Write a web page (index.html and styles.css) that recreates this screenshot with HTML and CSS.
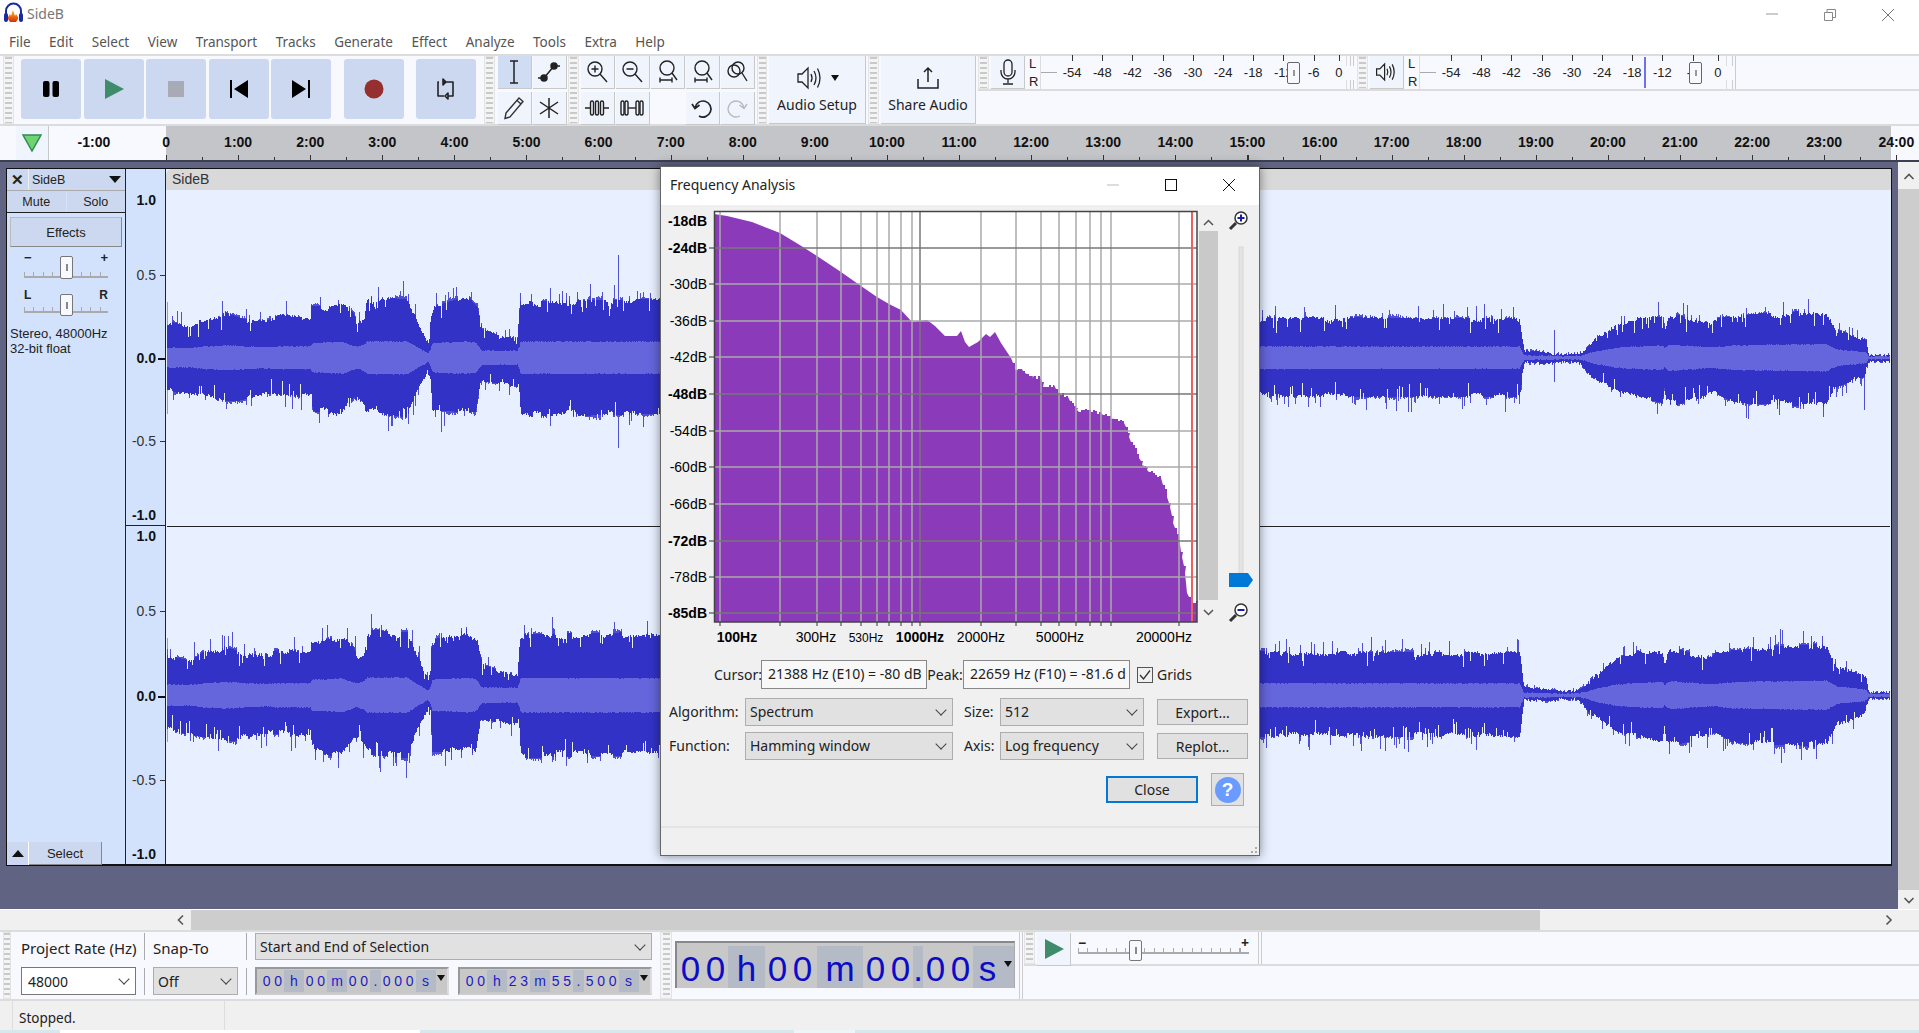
FILE: index.html
```html
<!DOCTYPE html>
<html lang="en">
<head>
  <meta charset="UTF-8" />
  <title>SideB</title>
  <link rel="stylesheet" href="styles.css">
</head>
<body>

  <!-- Title and menu -->
  <header class="titlebar">
    <svg class="logo" width="24" height="24" viewBox="0 0 24 24">
      <defs><linearGradient id="logo-wave" x1="0" y1="0" x2="0" y2="1"><stop offset="0" stop-color="#f7c01a"/><stop offset="1" stop-color="#e02a10"/></linearGradient></defs>
      <path d="M5 15V10a7.5 7.5 0 0 1 15 0v5" fill="none" stroke="#1a2a9c" stroke-width="2"/>
      <rect x="3" y="12" width="4" height="9" rx="2" fill="#1a2a9c"/>
      <rect x="18" y="12" width="4" height="9" rx="2" fill="#1a2a9c"/>
      <path d="M7 16l2-3 1 2 2-6 2 6 1-2 2 3v2l-2 3h-6l-2-3z" fill="url(#logo-wave)"/>
    </svg>
    <span class="app-title">SideB</span>
    <div class="win-controls">
      <svg width="14" height="14" viewBox="0 0 14 14"><path d="M1 6h12" stroke="#999" fill="none"/></svg>
      <svg width="14" height="14" viewBox="0 0 14 14"><path d="M1.5 4.5h8v8h-8zM4 4.500V1.500h8.500v8H9.500" stroke="#888" fill="none"/></svg>
      <svg width="14" height="14" viewBox="0 0 14 14"><path d="M1 1l12 12M13 1L1 13" stroke="#777" fill="none"/></svg>
    </div>
  </header>
  <nav class="menubar">
    <span>File</span><span>Edit</span><span>Select</span><span>View</span><span>Transport</span><span>Tracks</span><span>Generate</span><span>Effect</span><span>Analyze</span><span>Tools</span><span>Extra</span><span>Help</span>
  </nav>

  <!-- Toolbars -->
  <section class="toolrow">
    <div class="dock dock-transport">
      <div class="grip"></div>
      <div class="transport">
        <button class="tbtn"><svg width="24" height="24" viewBox="0 0 24 24"><rect x="4" y="4" width="6.500" height="16" rx="2"/><rect x="13.500" y="4" width="6.500" height="16" rx="2"/></svg></button>
        <button class="tbtn"><svg width="24" height="24" viewBox="0 0 24 24"><path d="M3 2l19 10L3 22z" fill="#3f8c6c"/></svg></button>
        <button class="tbtn"><svg width="24" height="24" viewBox="0 0 24 24"><rect x="4" y="4" width="16" height="16" fill="#a8aab6"/></svg></button>
        <button class="tbtn"><svg width="24" height="24" viewBox="0 0 24 24"><path d="M3 3h2v18H3zM21 3v18L7 12z"/></svg></button>
        <button class="tbtn"><svg width="24" height="24" viewBox="0 0 24 24"><path d="M19 3h2v18h-2zM3 3v18l14-9z"/></svg></button>
        <button class="tbtn tbtn-record"><svg width="24" height="24" viewBox="0 0 24 24"><circle cx="12" cy="12" r="9.500" fill="#963030"/></svg></button>
        <button class="tbtn tbtn-loop"><svg width="24" height="24" viewBox="0 0 24 24" fill="none" stroke="#222" stroke-width="1.600"><path d="M9 5h10v14H14M10 19H4V5h1M9 2v6l3-3zM14 16v6l-3-3z" stroke-linejoin="round"/></svg></button>
      </div>
    </div>

    <div class="dock dock-tools">
      <div class="grip"></div>
      <div class="tool-grid">
        <button class="ibtn ibtn-on"><svg width="22" height="26" viewBox="0 0 22 26" fill="none" stroke="#222" stroke-width="1.500"><path d="M7 2h8M7 24h8M11 2v22"/></svg></button>
        <button class="ibtn"><svg width="26" height="26" viewBox="0 0 26 26" fill="none" stroke="#222" stroke-width="1.500"><path d="M2 19h6l10-12h6"/><circle cx="8" cy="19" r="3" fill="#222"/><circle cx="18" cy="7" r="3" fill="#222"/></svg></button>
        <button class="ibtn"><svg width="26" height="26" viewBox="0 0 26 26" fill="none" stroke="#333" stroke-width="1.400"><path d="M5 18L18 3l4 3.500L9 22l-5 1.500zM16 5.500l4 3.500"/></svg></button>
        <button class="ibtn"><svg width="24" height="24" viewBox="0 0 24 24" fill="none" stroke="#222" stroke-width="1.500"><path d="M12 2v20M3 6l18 12M21 6L3 18"/></svg></button>
      </div>
    </div>

    <div class="dock dock-zoom">
      <div class="grip"></div>
      <div class="zoom-grid">
        <button class="ibtn"><svg class="ico-zoom" width="24" height="26" viewBox="0 0 24 26"><circle cx="10" cy="10" r="7"/><path d="M15 15l7 8M6.500 10h7M10 6.500v7"/></svg></button>
        <button class="ibtn"><svg class="ico-zoom" width="24" height="26" viewBox="0 0 24 26"><circle cx="10" cy="10" r="7"/><path d="M15 15l7 8M6.500 10h7"/></svg></button>
        <button class="ibtn"><svg class="ico-zoom" width="24" height="26" viewBox="0 0 24 26"><circle cx="12" cy="9" r="7"/><path d="M17 14l5 7M5 21h12M5 18.500v5M17 18.500v5"/></svg></button>
        <button class="ibtn"><svg class="ico-zoom" width="24" height="26" viewBox="0 0 24 26"><circle cx="12" cy="9" r="7"/><path d="M17 14l5 7M5 21h12M5 18.500v5M17 18.500v5"/></svg></button>
        <button class="ibtn"><svg class="ico-zoom" width="24" height="26" viewBox="0 0 24 26"><circle cx="9" cy="12" r="6"/><circle cx="13" cy="9" r="6"/><path d="M17 14l5 8"/></svg></button>
        <button class="ibtn"><svg class="ico-zoom" width="26" height="24" viewBox="0 0 26 24"><path d="M1 12h5M20 12h5"/><rect x="6.500" y="5" width="3" height="14" rx="1.500"/><rect x="11.500" y="5" width="3" height="14" rx="1.500"/><rect x="16.500" y="5" width="3" height="14" rx="1.500"/></svg></button>
        <button class="ibtn"><svg class="ico-zoom" width="26" height="24" viewBox="0 0 26 24"><path d="M9 12h8"/><rect x="2" y="5" width="3" height="14" rx="1.500"/><rect x="6" y="5" width="3" height="14" rx="1.500"/><rect x="17" y="5" width="3" height="14" rx="1.500"/><rect x="21" y="5" width="3" height="14" rx="1.500"/></svg></button>
        <span></span>
        <button class="ibtn"><svg class="ico-zoom" width="26" height="26" viewBox="0 0 26 26"><path d="M6 13a8 8 0 1 1 4 8M3 9l3 4.500L10.500 10" stroke-width="1.700"/></svg></button>
        <button class="ibtn"><svg class="ico-redo" width="26" height="26" viewBox="0 0 26 26"><path d="M20 13a8 8 0 1 0-4 8M23 9l-3 4.500L15.500 10"/></svg></button>
      </div>
    </div>

    <div class="dock dock-setup">
      <div class="grip"></div>
      <button class="big-btn">
        <span class="big-ico">
          <svg width="30" height="24" viewBox="0 0 30 24" fill="none" stroke="#222" stroke-width="1.300"><path d="M2 8h4l6-6v20l-6-6H2zM15 8q2 4 0 8M18 5q4 7 0 14M21.500 2.500q5 9.500 0 19"/></svg>
          <i class="caret"></i>
        </span>
        Audio Setup
      </button>
    </div>

    <div class="dock dock-share">
      <div class="grip"></div>
      <button class="big-btn">
        <span class="big-ico">
          <svg width="26" height="26" viewBox="0 0 26 26" fill="none" stroke="#222" stroke-width="1.500"><path d="M13 3v14M9 7l4-4 4 4M3 14v9h20v-9"/></svg>
        </span>
        Share Audio
      </button>
    </div>

    <div class="dock dock-meters">
      <div class="meter-row">
        <div class="grip"></div>
        <button class="ibtn meter-btn"><svg width="20" height="28" viewBox="0 0 20 28" fill="none" stroke="#222" stroke-width="1.300"><rect x="6" y="2" width="8" height="16" rx="4"/><path d="M3 12v2a7 7 0 0 0 14 0v-2M10 21v4M5 26h10"/></svg></button>
        <div class="lr"><span>L</span><span>R</span></div>
        <div class="meter meter-rec">
          <span>-54</span><span>-48</span><span>-42</span><span>-36</span><span>-30</span><span>-24</span><span>-18</span><span>-12</span><span>-6</span><span class="meter-zero">0</span>
          <i class="meter-thumb"></i>
        </div>
        <div class="dock-sep"></div>
        <div class="grip"></div>
        <button class="ibtn meter-btn"><svg width="24" height="24" viewBox="0 0 30 24" fill="none" stroke="#222" stroke-width="1.500"><path d="M2 8h4l6-6v20l-6-6H2zM15 8q2 4 0 8M18 5q4 7 0 14M21.500 2.500q5 9.500 0 19"/></svg></button>
        <div class="lr"><span>L</span><span>R</span></div>
        <div class="meter meter-play">
          <span>-54</span><span>-48</span><span>-42</span><span>-36</span><span>-30</span><span>-24</span><span>-18</span><span>-12</span><span>-6</span><span class="meter-zero">0</span>
          <i class="meter-thumb"></i>
          <i class="meter-level"></i>
        </div>
        <div class="dock-sep"></div>
      </div>
    </div>
  </section>

  <!-- Timeline -->
  <section class="ruler">
    <button class="pin"><svg width="22" height="20" viewBox="0 0 22 20"><path d="M2 2h18L11 18z" fill="#6fd46f" stroke="#2f8a5a" stroke-width="1.500"/></svg></button>
    <div class="ruler-labels">
      <span>-1:00</span><span>0</span><span>1:00</span><span>2:00</span><span>3:00</span><span>4:00</span><span>5:00</span><span>6:00</span><span>7:00</span><span>8:00</span><span>9:00</span><span>10:00</span><span>11:00</span><span>12:00</span><span>13:00</span><span>14:00</span><span>15:00</span><span>16:00</span><span>17:00</span><span>18:00</span><span>19:00</span><span>20:00</span><span>21:00</span><span>22:00</span><span>23:00</span><span>24:00</span>
    </div>
  </section>

  <!-- Track -->
  <main class="tracks">
    <div class="track">
      <div class="tcp">
        <div class="tcp-head">
          <button class="tcp-close">✕</button>
          <button class="tcp-name">SideB<i class="caret caret-big"></i></button>
        </div>
        <div class="tcp-btns"><button>Mute</button><button>Solo</button></div>
        <button class="tcp-effects">Effects</button>
        <div class="tcp-slider"><span>−</span><span>+</span><i></i></div>
        <div class="tcp-slider tcp-pan"><span>L</span><span>R</span><i></i></div>
        <p class="tcp-info">Stereo, 48000Hz<br>32-bit float</p>
        <div class="tcp-foot">
          <button class="tcp-collapse"><i class="caret-up"></i></button>
          <button class="tcp-select">Select</button>
        </div>
      </div>
      <div class="vruler">
        <div class="vr-ch vr-top"><span class="major">1.0</span><span>0.5</span><span class="major zero">0.0</span><span>-0.5</span><span class="major">-1.0</span></div>
        <div class="vr-ch vr-bottom"><span class="major">1.0</span><span>0.5</span><span class="major zero">0.0</span><span>-0.5</span><span class="major">-1.0</span></div>
      </div>
      <div class="wave">
        <div class="wave-head">SideB</div>
        <svg id="wave" width="1725" height="675" viewBox="166 190 1725 675"></svg>
      </div>
    </div>
    <div class="vscroll">
      <svg class="chev" width="12" height="14" viewBox="0 0 12 14"><path d="M1.500 9L6 4.500 10.500 9"/></svg>
      <div class="vscroll-thumb"></div>
      <svg class="chev" width="12" height="14" viewBox="0 0 12 14"><path d="M1.500 5L6 9.500 10.500 5"/></svg>
    </div>
  </main>

  <div class="hscroll">
    <div class="hscroll-left"></div>
    <svg class="chev" width="21" height="14" viewBox="0 0 21 14"><path d="M13 2.500L8.500 7l4.500 4.500"/></svg>
    <div class="hscroll-thumb"></div>
    <svg class="chev chev-end" width="21" height="14" viewBox="0 0 21 14"><path d="M8.500 2.500L13 7l-4.500 4.500"/></svg>
  </div>

  <!-- Selection toolbar -->
  <section class="selbar">
    <div class="grip grip-sel"></div>
    <div class="selection">
      <span class="sel-label">Project Rate (Hz)</span>
      <i class="sel-sep"></i>
      <span class="sel-label">Snap-To</span>
      <i class="sel-sep"></i>
      <div class="combo sel-mode">Start and End of Selection</div>
      <div class="combo combo-white">48000</div>
      <i class="sel-sep"></i>
      <div class="combo">Off</div>
      <i class="sel-sep"></i>
      <div class="timefield"><b>0</b><b>0</b><u>h</u><b>0</b><b>0</b><u>m</u><b>0</b><b>0</b><em>.</em><b>0</b><b>0</b><b>0</b><u>s</u><i class="caret caret-time"></i></div>
      <i></i>
      <div class="timefield"><b>0</b><b>0</b><u>h</u><b>2</b><b>3</b><u>m</u><b>5</b><b>5</b><em>.</em><b>5</b><b>0</b><b>0</b><u>s</u><i class="caret caret-time"></i></div>
    </div>
    <div class="grip grip-time"></div>
    <div class="bigtime">
      <div class="bt-cell"><b>0</b><b>0</b></div><div class="bt-unit bt-h">h</div>
      <div class="bt-cell bt-min"><b>0</b><b>0</b></div><div class="bt-unit bt-m">m</div>
      <div class="bt-cell"><b>0</b><b>0</b></div><div class="bt-dot">.</div>
      <div class="bt-cell"><b>0</b><b>0</b></div><div class="bt-unit bt-s">s</div>
      <div class="bt-arrow"><i class="caret caret-time"></i></div>
    </div>
    <div class="dock-sep dock-sep-sel"></div>
    <div class="speed">
      <div class="grip"></div>
      <button class="ibtn meter-btn"><svg width="24" height="24" viewBox="0 0 24 24"><path d="M3 2l19 10L3 22z" fill="#3f8c6c"/></svg></button>
      <div class="tcp-slider speed-slider"><span>−</span><span>+</span><i></i></div>
      <div class="dock-sep"></div>
    </div>
  </section>

  <footer class="statusbar"><span class="status-text">Stopped.</span></footer>
  <div class="taskstrip"></div>

  <!-- Frequency Analysis dialog -->
  <div class="dialog">
    <div class="dlg-title">
      <span>Frequency Analysis</span>
      <div class="dlg-controls">
        <svg width="14" height="14" viewBox="0 0 14 14"><path d="M1 7h12" stroke="#bbb" fill="none"/></svg>
        <svg width="14" height="14" viewBox="0 0 14 14"><rect x="1.500" y="1.500" width="11" height="11" stroke="#111" fill="none"/></svg>
        <svg width="14" height="14" viewBox="0 0 14 14"><path d="M1 1l12 12M13 1L1 13" stroke="#111" fill="none"/></svg>
      </div>
    </div>
    <svg id="plot" width="598" height="445" viewBox="661 205 598 445"></svg>
    <div class="readouts">
      <label class="ro-cursor">Cursor:</label>
      <div class="ro-field">21388 Hz (E10) = -80 dB</div>
      <label class="ro-peak">Peak:</label>
      <div class="ro-field ro-field2">22659 Hz (F10) = -81.6 d</div>
      <i class="check"><svg width="14" height="14" viewBox="0 0 14 14"><path d="M2 7l3.500 4L12 2.500" fill="none" stroke="#333" stroke-width="1.300"/></svg></i>
      <span>Grids</span>
    </div>
    <div class="params">
      <span>Algorithm:</span><div class="combo">Spectrum</div>
      <span class="param-right">Size:</span><div class="combo">512</div>
      <button class="dlg-btn">Export...</button>
      <span>Function:</span><div class="combo">Hamming window</div>
      <span class="param-right">Axis:</span><div class="combo">Log frequency</div>
      <button class="dlg-btn">Replot...</button>
    </div>
    <div class="dlg-actions">
      <button class="dlg-btn dlg-close">Close</button>
      <button class="dlg-help"><span>?</span></button>
    </div>
    <div class="dlg-foot"></div>
  </div>

  <script src="script.js"></script>
</body>
</html>
```

FILE: styles.css
```css
/* --- BASE --- */
* { margin: 0; padding: 0; box-sizing: border-box; }
html, body { width: 1919px; height: 1033px; overflow: hidden; }
body {
  position: relative;
  display: flex;
  flex-direction: column;
  background: #fff;
  font-family: "Noto Sans", sans-serif;
  font-size: 13px;
  color: #222;
}
button { font: inherit; color: inherit; border: 0; background: none; }
svg { display: block; }

/* --- TITLE + MENU --- */
.titlebar {
  height: 30px;
  flex: none;
  display: flex;
  align-items: center;
  padding-left: 1px;
}
.logo { margin-top: -4px; }
.app-title { margin: -3px 0 0 2px; font-size: 14px; color: #777; }
.win-controls {
  margin-left: auto;
  display: flex;
  gap: 44px;
  padding-right: 24px;
}
.menubar {
  height: 24px;
  flex: none;
  display: flex;
  align-items: center;
  gap: 18.500px;
  padding-left: 9px;
  font-size: 13.500px;
  color: #555;
}

/* --- TOOLBARS --- */
.toolrow {
  height: 72px;
  flex: none;
  display: flex;
  background: #f8f9ff;
  border-top: 2px solid #dcdcdc;
  border-bottom: 2px solid #dcdcdc;
}
.dock { display: flex; height: 100%; }
.grip {
  width: 11px;
  flex: none;
  background-color: #f3f4f6;
  background-image: repeating-linear-gradient(#c9c9c9 0 2px, transparent 2px 5px);
  background-size: 7px 100%;
  background-repeat: no-repeat;
  background-position: center;
  border: 1px solid #e4e4e4;
}
.dock-transport { width: 482px; padding-left: 3px; }
.transport { display: flex; gap: 2.5px; padding: 3px 0 4px 7px; }
.tbtn {
  width: 60px;
  height: 60px;
  background: #ccd8ef;
  border-radius: 3px;
  display: flex;
  align-items: center;
  justify-content: center;
}
.tbtn-record { margin-left: 10.500px; }
.tbtn-loop { margin-left: 9.500px; }

.ibtn {
  background: #f0f4fd;
  border-right: 1px solid #c8c8c8;
  border-bottom: 1px solid #c8c8c8;
  display: flex;
  align-items: center;
  justify-content: center;
}
.ibtn-on { background: #cfdcf2; }
.dock-tools { width: 86px; margin-left: 2px; margin-right: -2px; }
.tool-grid, .zoom-grid {
  display: grid;
  gap: 3px 1.5px;
  grid-auto-rows: 33px;
  margin-left: 3px;
  align-content: start;
}
.tool-grid { grid-template-columns: repeat(2, 33.500px); }
.dock-zoom { width: 189px; }
.zoom-grid { grid-template-columns: repeat(5, 33.500px); margin-left: 2px; }
.ico-zoom { fill: none; stroke: #222; stroke-width: 1.400; }
.ico-redo { fill: none; stroke: #b8b8b8; stroke-width: 1.400; }

.dock-setup { width: 111px; }
.dock-share { width: 110px; }
.dock-setup .grip { width: 10px; }
.big-btn {
  margin-left: 2px;
  flex: 1;
  background: #f0f4fd;
  border-right: 1px solid #c8c8c8;
  border-bottom: 1px solid #c8c8c8;
  display: flex;
  flex-direction: column;
  align-items: center;
  gap: 4px;
  padding-top: 9px;
  margin-right: 2px;
  font-size: 14px;
}
.big-ico { display: flex; align-items: center; gap: 5px; height: 26px; }
.caret {
  display: inline-block;
  width: 0;
  height: 0;
  border-left: 4px solid transparent;
  border-right: 4px solid transparent;
  border-top: 6px solid #111;
}

.dock-meters { flex: 1; }
.meter-row {
  flex: 1;
  height: 35px;
  display: flex;
  border-bottom: 2px solid #dcdcdc;
}
.meter-btn { width: 34px; height: 33px; margin-left: 2px; flex: none; }
.lr {
  width: 15px;
  flex: none;
  display: flex;
  flex-direction: column;
  justify-content: space-between;
  padding-left: 4px;
  font: 13px/15px "Liberation Sans", sans-serif;
}
.meter {
  position: relative;
  flex: none;
  display: flex;
  align-items: center;
  padding-left: 16px;
  font: 13px "Liberation Sans", sans-serif;
  background: linear-gradient(#aaa, #aaa) left center / 100% 1px no-repeat;
  border-left: 1px solid #ddd;
  border-right: 1px solid #ddd;
}
.meter-rec { width: 307px; margin-right: 3px; }
.meter-play { width: 308px; margin-right: 5px; }
.meter span {
  position: relative;
  flex: none;
  width: 30.200px;
  text-align: center;
  background: #f8f9ff;
  line-height: 14px;
}
.meter span::before {
  content: '';
  position: absolute;
  top: -11px;
  left: 50%;
  width: 1px;
  height: 6px;
  background: #333;
}
.meter span.meter-zero { margin-left: -5px; }
.meter-thumb {
  position: absolute;
  left: 246px;
  top: 6px;
  width: 13px;
  height: 22px;
  border: 1.500px solid #666;
  border-radius: 2px;
  background: linear-gradient(#999, #999) center / 2px 6px no-repeat, #f8f9ff;
}
.meter-play .meter-thumb { left: 269px; }
.meter-level {
  position: absolute;
  left: 224px;
  top: 1px;
  width: 2px;
  height: 31px;
  background: #6f6ff0;
}
.dock-sep { width: 4px; flex: none; border-left: 1px solid #ccc; border-right: 1px solid #ccc; margin-right: 16px; }
.meter-rec + .dock-sep { margin-right: 3px; }

/* --- RULER --- */
.ruler {
  height: 34px;
  flex: none;
  display: flex;
  background:
    repeating-linear-gradient(90deg, #333 0 1px, transparent 1px 72.100px) 166px 100% / 100% 5px no-repeat,
    repeating-linear-gradient(90deg, #333 0 1px, transparent 1px 72.100px) 202px 100% / 100% 3px no-repeat,
    linear-gradient(90deg, #f8f9ff 166px, #c4c5c8 166px, #c4c5c8 1891px, #f8f9ff 1891px);
}
.pin {
  width: 33px;
  flex: none;
  margin-left: 16px;
  background: #f0f4fd;
  border-right: 1px solid #c8c8c8;
  display: flex;
  align-items: center;
  justify-content: center;
}
.ruler-labels {
  display: flex;
  margin-left: 8.900px;
  padding-top: 8px;
  font: bold 14px "Liberation Sans", sans-serif;
  color: #111;
}
.ruler-labels span { width: 72.100px; flex: none; text-align: center; }

/* --- TRACK --- */
.tracks {
  height: 749px;
  flex: none;
  display: flex;
  background: #606482;
  border-top: 2px solid #3d4050;
  padding-top: 6px;
}
.track {
  width: 1886px;
  height: 698px;
  margin-left: 6px;
  display: flex;
  border: 1px solid #111;
  border-bottom-width: 2px;
  background: #d2e2fc;
  font-family: "Liberation Sans", sans-serif;
  font-size: 12px;
}
.tcp {
  width: 119px;
  flex: none;
  display: flex;
  flex-direction: column;
  background: #d2e2fc;
  border-right: 1.500px solid #222;
  font-size: 13px;
}
.tcp-head { display: flex; height: 21px; }
.tcp-close {
  width: 22px;
  background: #ccd8ef;
  border-right: 1px solid #eee;
  font-weight: bold;
  font-size: 15px;
}
.tcp-name {
  flex: 1;
  position: relative;
  text-align: left;
  padding-left: 3px;
  background: #ccd8ef;
  font-size: 12.500px;
}
.caret-big {
  position: absolute;
  right: 4px;
  top: 7px;
  border-left-width: 6.500px;
  border-right-width: 6.500px;
  border-top-width: 7px;
}
.tcp-btns {
  display: flex;
  gap: 1px;
  height: 23px;
  border-top: 1px solid #aaa;
  border-bottom: 1.500px solid #222;
}
.tcp-btns button { flex: 1; background: #ccd8ef; font-size: 12.500px; }
.tcp-effects {
  height: 30px;
  margin: 4px 3px 0;
  background: #ccd8ef;
  border: 1px solid #bbb;
  border-right-color: #888;
  border-bottom-color: #888;
  font-size: 13px;
}
.tcp-slider {
  position: relative;
  display: flex;
  justify-content: space-between;
  height: 26px;
  margin: 8px 17px 0;
  line-height: 12px;
  font-weight: bold;
  background:
    linear-gradient(#aaa, #aaa) left 21px / 100% 2px no-repeat,
    repeating-linear-gradient(90deg, #aaa 0 1px, transparent 1px 9.500px) left 17px / 100% 4px no-repeat;
}
.tcp-slider span { margin-top: -3px; }
.tcp-slider i {
  position: absolute;
  left: 36px;
  top: 1px;
  width: 13px;
  height: 23px;
  background: linear-gradient(#888, #888) center / 2px 7px no-repeat, #f8f9ff;
  border: 1.500px solid #777;
  border-radius: 2px;
}
.tcp-pan { margin-top: 9px; }
.tcp-pan span { font-size: 12px; margin-top: -1px; }
.tcp-pan i { top: 4px; height: 22px; }
.tcp-info { margin: 11px 0 0 3px; line-height: 14.500px; font-size: 13px; }
.tcp-foot { margin-top: auto; display: flex; height: 23px; padding: 0 23px 0 0; transform: translateY(1px); }
.tcp-collapse { width: 22px; background: #ccd8ef; border-right: 1px solid #fff; display: flex; align-items: center; justify-content: center; }
.caret-up {
  width: 0;
  height: 0;
  border-left: 6px solid transparent;
  border-right: 6px solid transparent;
  border-top: 0;
  border-bottom: 7px solid #111;
}
.tcp-select {
  flex: 1;
  background: #ccd8ef;
  border-right: 1px solid #888;
  border-bottom: 1px solid #888;
  font-size: 13px;
}

.vruler { width: 40px; flex: none; border-right: 1.500px solid #222; }
.vr-ch {
  display: grid;
  font-size: 14px;
  color: #333;
}
.vr-ch span { position: relative; height: 16px; line-height: 16px; text-align: right; padding-right: 9px; }
.vr-ch span::after {
  content: '';
  position: absolute;
  right: 0;
  top: 8px;
  width: 5px;
  height: 1px;
  background: #333;
}
.vr-ch .major { font-weight: bold; color: #111; }
.vr-ch .major::after { width: 0; }
.vr-ch .zero::after { width: 7px; height: 2px; background: #111; }
.vr-top { height: 357px; padding-top: 23px; grid-template-rows: 75px 83px 83px 74px 16px; border-bottom: 1px solid #222; }
.vr-bottom { padding-top: 2px; grid-template-rows: 75px 85px 84px 74px 16px; }

.wave { flex: 1; display: flex; flex-direction: column; background: #e8f0ff; min-width: 0; }
.wave-head {
  height: 21px;
  padding-left: 6px;
  background: #d9d9d9;
  border-radius: 6px 0 0 0;
  font-size: 14px;
  line-height: 21px;
  color: #333;
}

.chev { flex: none; fill: none; stroke: #555; stroke-width: 1.600; }
.vscroll {
  margin-left: auto;
  width: 21px;
  margin-top: -6px;
  background: #f0f0f0;
  display: flex;
  flex-direction: column;
  align-items: center;
  padding: 8px 0 2px;
}
.vscroll-thumb { flex: 1; width: 100%; margin: 5px 0 3px; background: #cdcdcd; }

.hscroll {
  height: 21px;
  flex: none;
  display: flex;
  align-items: center;
  background: #f0f0f0;
  border-top: 1px solid #fff;
}
.hscroll-left { width: 170px; }
.hscroll-thumb { width: 1349px; height: 100%; background: #cdcdcd; }
.chev-end { margin-left: auto; margin-right: 20px; }

/* --- SELECTION TOOLBAR --- */
.selbar {
  height: 71px;
  display: flex;
  background: #f8f9ff;
  border-bottom: 2px solid #dcdcdc;
  border-top: 2px solid #dcdcdc;
  font-size: 14px;
  flex: none;
}
.grip-sel { margin: 0 10px 0 3px; height: 100%; width: 8px; }
.selection {
  display: grid;
  width: 630px;
  grid-template-columns: 115px 17px 85px 17px 194px 9px 194px;
  grid-template-rows: 27px 28px;
  row-gap: 7px;
  padding-top: 1px;
  align-items: center;
}
.sel-label { white-space: nowrap; padding-top: 3px; font-size: 15px; }
.sel-sep { width: 1px; height: 27px; justify-self: center; background: #aaa; }
.combo {
  position: relative;
  height: 100%;
  display: flex;
  align-items: center;
  padding-left: 4px;
  background: #e1e1e1;
  border: 1px solid #adadad;
  white-space: nowrap;
}
.combo::after {
  content: '';
  position: absolute;
  right: 7px;
  top: 50%;
  width: 7px;
  height: 7px;
  margin-top: -6px;
  border-right: 1px solid #444;
  border-bottom: 1px solid #444;
  transform: rotate(45deg);
}
.sel-mode { grid-column: span 3; }
.combo-white { background: #fff; border-color: #777; padding-left: 6px; }
.timefield {
  display: flex;
  height: 100%;
  padding: 3px 0 3px 4px;
  background: #c8c8c8;
  border: 2px solid #999;
  border-right-color: #ddd;
  border-bottom-color: #ccc;
  font: 14px/22px "Liberation Sans", sans-serif;
  color: #1c1cc4;
  align-items: center;
}
.timefield b, .timefield u, .timefield em {
  font-weight: normal;
  font-style: normal;
  text-decoration: none;
  text-align: center;
}
.timefield b { width: 11.500px; }
.timefield u { width: 20px; background: #b4bac6; }
.timefield em { width: 11px; background: #b4bac6; }
.caret-time { margin-left: auto; margin-right: 2px; margin-top: -6px; }

.grip-time { width: 12px; margin-left: 9px; }
.bigtime {
  width: 340px;
  height: 47px;
  margin: 9px 0 0 3px;
  padding: 3px 0 0 1px;
  display: flex;
  background: #c8c8c8;
  border-top: 2px solid #888;
  border-left: 2px solid #888;
  border-right: 1px solid #aaa;
  font: 35px/46px "Liberation Sans", sans-serif;
  color: #0c0cc8;
}
.bt-cell { width: 50px; display: flex; }
.bt-cell b { width: 25px; text-align: center; font-weight: normal; }
.bt-unit { text-align: center; background: #b4bac6; }
.bt-h { width: 37px; }
.bt-min { width: 52px; }
.bt-m { width: 46px; }
.bt-s { width: 29px; }
.bt-dot { width: 10px; text-align: center; background: #b4bac6; }
.bt-arrow { flex: 1; display: flex; align-items: center; background: #b4bac6; padding-left: 1px; }
.dock-sep-sel { margin: 0 1px 0 4px; }
.speed { flex: 1; display: flex; height: 34px; align-items: stretch; border-bottom: 2px solid #dcdcdc; }
.speed .meter-btn { margin-top: 1px; }
.speed-slider { width: 171px; margin: 8px 9px 0 7px; height: 20px; flex: none; }
.speed-slider { background:
    linear-gradient(#aaa, #aaa) left 12px / 100% 2px no-repeat,
    repeating-linear-gradient(90deg, #aaa 0 1px, transparent 1px 9.500px) left 8px / 100% 4px no-repeat; }
.speed-slider i { left: 51px; top: 0; height: 21px; }

/* --- STATUS --- */
.statusbar {
  flex: 1;
  min-height: 0;
  overflow: hidden;
  display: flex;
  background: #f0f0f0;
  padding-left: 12px;
}
.status-text {
  width: 213px;
  padding: 5px 0 0 6px;
  height: 100%;
  line-height: 25px;
  font-size: 13.500px;
  border-left: 1px solid #ddd;
  border-right: 1px solid #ddd;
}
.taskstrip {
  height: 3px;
  flex: none;
  background: linear-gradient(90deg, #d5e8ec 60px, #fff 60px, #fff 420px, #d5e8ec 420px, #d5e8ec 794px, #eef5f6 794px, #eef5f6 855px, #d5e8ec 855px);
}

/* --- DIALOG --- */
.dialog {
  position: absolute;
  left: 660px;
  top: 166px;
  width: 600px;
  height: 690px;
  display: flex;
  flex-direction: column;
  background: #f0f0f0;
  border: 1px solid #666;
  box-shadow: 0 0 10px rgba(0,0,0,0.45);
  font-size: 14px;
}
.dlg-title {
  height: 38px;
  flex: none;
  display: flex;
  align-items: center;
  padding: 0 0 3px 9px;
  background: #fff;
}
.dlg-controls { margin-left: auto; display: flex; gap: 44px; padding-right: 23px; }
.readouts {
  display: flex;
  align-items: center;
  height: 29px;
  margin-top: 10px;
  padding-left: 53px;
}
.ro-cursor { width: 47px; text-align: right; }
.ro-peak { width: 36px; text-align: center; }
.ro-field {
  width: 166px;
  height: 100%;
  padding-left: 6px;
  line-height: 26px;
  background: #f8f8f8;
  border: 1px solid #888;
  white-space: nowrap;
  overflow: hidden;
}
.ro-field2 { width: 167px; }
.check {
  width: 16px;
  height: 16px;
  margin: 0 4px 0 7px;
  border: 1.500px solid #555;
  display: flex;
  align-items: center;
  justify-content: center;
}
.params {
  display: grid;
  grid-template-columns: 76px 208px 47px 144px 104px;
  grid-template-rows: 28px 28px;
  gap: 6px 0;
  margin-top: 9px;
  padding-left: 8px;
  align-items: center;
}
.params span { white-space: nowrap; margin-top: -2px; }
.param-right { padding-left: 11px; }
.params .combo { height: 28px; padding-bottom: 1px; }
.params .dlg-btn { margin-left: 13px; width: 91px; }
.dlg-btn {
  height: 26px;
  background: #e1e1e1;
  border: 1px solid #adadad;
}
.dlg-actions {
  display: flex;
  align-items: center;
  justify-content: flex-end;
  gap: 13px;
  margin-top: 13px;
  padding-right: 15px;
}
.dlg-close { width: 92px; height: 27px; border: 2px solid #0078d7; }
.dlg-help {
  width: 33px;
  height: 33px;
  background: #e1e1e1;
  border: 1px solid #adadad;
  display: flex;
  align-items: center;
  justify-content: center;
}
.dlg-help span {
  width: 26px;
  height: 26px;
  border-radius: 50%;
  background: #6a9cff;
  color: #fff;
  font: bold 19px/26px "Liberation Sans", sans-serif;
}
.dlg-foot {
  flex: 1;
  margin-top: 20px;
  border-top: 2px solid #e4e4e4;
  background:
    radial-gradient(circle, #aaa 1px, transparent 1.200px) right 1px bottom 1px / 4px 4px no-repeat,
    radial-gradient(circle, #aaa 1px, transparent 1.200px) right 5px bottom 1px / 4px 4px no-repeat,
    radial-gradient(circle, #aaa 1px, transparent 1.200px) right 1px bottom 5px / 4px 4px no-repeat;
}
```

FILE: script.js
```js
// simple repeatable random so the picture stays the same
function makeRandom(seed) {
  let s = seed;
  return () => {
    s = (s * 1664525 + 1013904223) % 4294967296;
    return s / 4294967296;
  };
}

/* --- WAVEFORM --- */
const fromLeft = ([zx, amp]) => [166 + zx / 3, amp];
const fromRight = ([zx, amp]) => [1260 + zx / 2.38, amp];

const envTop = [
  ...[[0, 37], [70, 32], [110, 41], [160, 41], [170, 46], [230, 39], [300, 38], [340, 44], [400, 41],
    [430, 42], [432, 52], [470, 52], [530, 56], [560, 44], [570, 37], [590, 42], [600, 61], [720, 59],
    [745, 42], [770, 24], [785, 14], [790, 42], [800, 52], [900, 62], [930, 51], [945, 29], [1000, 22],
    [1050, 20], [1058, 57], [1480, 59]].map(fromLeft),
  ...[[0, 41], [620, 40], [630, 8], [700, 5], [720, 4], [760, 5], [775, 8], [800, 20], [850, 35], [900, 41],
    [960, 41], [965, 30], [975, 45], [1075, 35], [1085, 40], [1200, 45], [1350, 48], [1375, 28], [1445, 18],
    [1450, 3], [1495, 3]].map(fromRight)
];
const envBottom = [
  ...[[0, 33], [100, 39], [170, 43], [210, 43], [300, 36], [400, 39], [430, 39], [437, 53], [520, 59],
    [560, 39], [600, 56], [720, 59], [750, 33], [780, 16], [790, 23], [795, 53], [925, 54], [940, 23],
    [1000, 26], [1055, 29], [1060, 59], [1480, 56]].map(fromLeft),
  ...[[0, 39], [620, 39], [630, 5], [700, 6], [720, 4], [760, 5], [790, 19], [850, 35], [960, 45], [964, 30],
    [968, 45], [990, 47], [1040, 42], [1085, 35], [1130, 45], [1350, 49], [1375, 29], [1440, 19], [1450, 4], [1495, 4]].map(fromRight)
];

function lerp(points, x) {
  for (let i = 1; i < points.length; i++) {
    if (x <= points[i][0]) {
      const a = points[i - 1], b = points[i];
      return a[1] + (b[1] - a[1]) * (x - a[0]) / (b[0] - a[0]);
    }
  }
  return 4;
}

function jagged(rnd, level, clump) {
  const r = rnd();
  const teeth = Math.min(level * 0.3, 11);
  if (r < 0.07) return level * clump + teeth * (0.4 + rnd());
  if (r < 0.15) return level * clump - teeth * (0.3 + rnd());
  return level * clump + (rnd() - 0.5) * 3;
}

function channelPaths(center, seed, scale) {
  const rnd = makeRandom(seed);
  let peak = '', rms = '', spikes = '';
  let clump = 1, clumpLeft = 0;
  for (let x = 166; x < 1891; x++) {
    if (x > 662 && x < 1257) continue;
    if (clumpLeft-- <= 0) {
      clump = 0.9 + rnd() * 0.16;
      clumpLeft = 3 + Math.floor(rnd() * 9);
    }
    const up = lerp(envTop, x) * scale;
    const down = lerp(envBottom, x) * scale;
    const top = jagged(rnd, up, clump);
    const bottom = jagged(rnd, down, clump);
    peak += `M${x + 0.5} ${Math.round(center - Math.min(top, up))}V${Math.round(center + Math.min(bottom, down))}`;
    if (top > up) spikes += `M${x + 0.5} ${Math.round(center - top)}V${center}`;
    if (bottom > down) spikes += `M${x + 0.5} ${center}V${Math.round(center + bottom)}`;
    const band = (up + down) * 0.135 + rnd();
    rms += `M${x + 0.5} ${(center - band).toFixed(1)}V${(center + band).toFixed(1)}`;
  }
  return `<path d="${spikes}" stroke="#5050d4"/><path d="${peak}" stroke="#3232c6"/><path d="${rms}" stroke="#6565dc"/>`;
}

// the tallest single peaks go underneath, so they do not cross the darker bands
document.getElementById('wave').innerHTML =
  '<g fill="none" stroke-width="1" shape-rendering="crispEdges">' +
  '<path d="M166.500 302V414M166.500 639V743" stroke="#9a9ad0"/>' +
  '<path d="M617.500 255V448M440.500 358V432M1865.500 358V410M405.500 696V779M1555.500 330V382" stroke="#5050d4"/>' +
  channelPaths(358, 11, 1) +
  channelPaths(696, 47, 1.07) +
  '<path d="M166 526.500H1891" stroke="#222"/>' +
  '</g>';

/* --- SPECTRUM PLOT --- */
const dbLines = [
  ['-18dB', 221, true, false], ['-24dB', 248, true, true], ['-30dB', 284, false, true],
  ['-36dB', 321, false, true], ['-42dB', 357, false, true], ['-48dB', 394, true, true],
  ['-54dB', 431, false, true], ['-60dB', 467, false, true], ['-66dB', 504, false, true],
  ['-72dB', 541, true, true], ['-78dB', 577, false, true], ['-85dB', 613, true, true]
];
const hzLines = [720, 780, 817, 841, 861, 877, 889, 901, 912, 920, 981, 1016, 1041, 1059, 1076, 1090, 1101, 1111, 1179];
const hzLabels = [
  ['100Hz', 737, 'b'], ['300Hz', 816, ''], ['530Hz', 866, 's'], ['1000Hz', 920, 'b'],
  ['2000Hz', 981, ''], ['5000Hz', 1060, ''], ['20000Hz', 1164, '']
];
// spectrum outline as [x, y]
const curve = [
  [714, 214], [727, 216], [752, 222], [780, 233], [803, 247], [817, 256], [841, 272], [861, 286],
  [877, 297], [889, 304], [901, 310], [912, 322], [927, 320], [935, 326], [945, 336], [957, 336],
  [961, 331], [965, 342], [969, 347], [978, 342], [986, 334], [990, 337], [995, 332], [1001, 343],
  [1011, 358], [1016, 372], [1021, 367], [1025, 373], [1032, 378], [1040, 377], [1043, 387],
  [1054, 385], [1058, 393], [1068, 397], [1077, 410], [1087, 410], [1101, 413], [1112, 418],
  [1124, 423], [1129, 437], [1139, 458], [1142, 465], [1147, 470], [1161, 478], [1167, 497],
  [1170, 507], [1173, 523], [1179, 537], [1182, 557], [1185, 573], [1187, 593], [1192, 603],
  [1197, 603]
];

// the high end of the curve is stepped, not smooth
const curveRnd = makeRandom(5);
const outline = [];
curve.forEach((pt, i) => {
  if (i === 0 || pt[0] < 1016) {
    outline.push(pt);
    return;
  }
  const prev = curve[i - 1];
  for (let x = prev[0] + 2; x < pt[0]; x += 2) {
    const y = prev[1] + (pt[1] - prev[1]) * (x - prev[0]) / (pt[0] - prev[0]) + (curveRnd() - 0.5) * 4;
    outline.push([x, Math.round(y)], [x + 2, Math.round(y)]);
  }
  outline.push(pt);
});
outline.push([1197, 622], [714, 622]);

let plot = '<rect x="714" y="211" width="483" height="411" fill="#fff"/>';
plot += `<polygon points="${outline.map(p => p.join(',')).join(' ')}" fill="#8b3ab9"/>`;
hzLines.forEach(x => {
  const color = x === 920 ? '#777' : '#aaa';
  plot += `<path d="M${x} 212V622" stroke="${color}" stroke-width="1.500"/>`;
  plot += `<path d="M${x} 622V626" stroke="#333"/>`;
});
dbLines.forEach(([label, y, bold, line]) => {
  if (line) {
    plot += `<path d="M714 ${y}H1197" stroke="${bold ? '#777' : '#aaa'}" stroke-width="1.500"/>`;
    plot += `<path d="M709 ${y}H714" stroke="#333"/>`;
  }
  plot += `<text x="707" y="${y + 5}" text-anchor="end" font-weight="${bold ? 'bold' : 'normal'}">${label}</text>`;
});
hzLabels.forEach(([label, x, kind]) => {
  plot += `<text x="${x}" y="642" text-anchor="middle" font-size="${kind === 's' ? 12 : 14}" font-weight="${kind === 'b' ? 'bold' : 'normal'}">${label}</text>`;
});
plot += '<path d="M1192 212V622" stroke="#f06060" stroke-width="2"/>';
plot += '<rect x="714.500" y="211.500" width="482.500" height="410.500" fill="none" stroke="#444" stroke-width="1.500"/>';

// scrollbar beside the plot
plot += '<rect x="1199" y="231" width="19" height="369" fill="#c9c9c9"/>';
plot += '<path d="M1204 225l4.500-4.500 4.500 4.500M1204 610l4.500 4.500 4.500-4.500" fill="none" stroke="#555" stroke-width="1.500"/>';

// zoom slider
plot += '<rect x="1239" y="247" width="4" height="326" fill="#e4e4e4" stroke="#d8d8d8"/>';
plot += '<path d="M1229 573h19l5 7-5 7h-19z" fill="#0078d7"/>';
const lens = (cy, inner) =>
  `<circle cx="1241" cy="${cy - 2}" r="6" fill="#fff" stroke="#333" stroke-width="1.500"/>` +
  `<path d="M1236 ${cy + 3}l-6 6" stroke="#333" stroke-width="3"/><path d="${inner}" stroke="#1a1ab0" stroke-width="2"/>`;
plot += lens(220, 'M1237.500 218h7M1241 214.500v7');
plot += lens(612, 'M1237.500 610h7');

const plotSvg = document.getElementById('plot');
plotSvg.innerHTML = plot;
plotSvg.style.fontFamily = '"Liberation Sans", sans-serif';
plotSvg.style.fontSize = '14px';
```
